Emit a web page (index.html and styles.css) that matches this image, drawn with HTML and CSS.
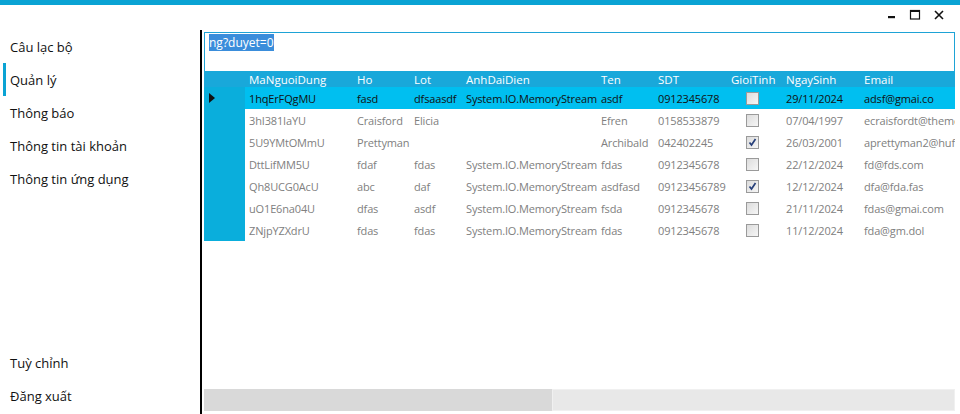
FILE: index.html
```html
<!DOCTYPE html>
<html lang="vi">
<head>
<meta charset="utf-8">
<title>Quản lý</title>
<link rel="stylesheet" href="styles.css">
</head>
<body>
<div class="app">
  <div class="topbar"></div>
  <div class="titlebar">
    <div class="winctl">
      <svg class="ctl" width="24" height="20" viewBox="0 0 24 20"><rect x="9" y="16" width="7" height="2.2" fill="#111"/></svg>
      <svg class="ctl" width="24" height="20" viewBox="0 0 24 20"><rect x="7.5" y="10.5" width="9" height="8.5" fill="none" stroke="#111" stroke-width="1.2"/><rect x="7" y="10" width="10" height="2" fill="#111"/></svg>
      <svg class="ctl" width="24" height="20" viewBox="0 0 24 20"><path d="M8 11 L16 19 M16 11 L8 19" stroke="#111" stroke-width="1.6"/></svg>
    </div>
  </div>
  <div class="main">
    <nav class="sidebar">
      <div class="nav-item">Câu lạc bộ</div>
      <div class="nav-item active">Quản lý</div>
      <div class="nav-item">Thông báo</div>
      <div class="nav-item">Thông tin tài khoản</div>
      <div class="nav-item">Thông tin ứng dụng</div>
      <div class="spacer"></div>
      <div class="nav-item">Tuỳ chỉnh</div>
      <div class="nav-item">Đăng xuất</div>
    </nav>
    <section class="content">
      <div class="query"><span class="sel">ng?duyet=0</span></div>
      <div class="grid">
        <div class="row head">
          <div class="rh"></div>
          <div class="c">MaNguoiDung</div><div class="c">Ho</div><div class="c">Lot</div><div class="c">AnhDaiDien</div><div class="c">Ten</div><div class="c">SDT</div><div class="c">GioiTinh</div><div class="c">NgaySinh</div><div class="c">Email</div>
        </div>
        <div class="row selected">
          <div class="rh"><svg width="8" height="10" viewBox="0 0 8 10"><path d="M1 0 L7 5 L1 10 Z" fill="#111"/></svg></div>
          <div class="c">1hqErFQgMU</div><div class="c">fasd</div><div class="c">dfsaasdf</div><div class="c">System.IO.MemoryStream</div><div class="c">asdf</div><div class="c">0912345678</div><div class="c cb"><span class="box"></span></div><div class="c">29/11/2024</div><div class="c">adsf@gmai.co</div>
        </div>
        <div class="row">
          <div class="rh"></div>
          <div class="c">3hI381IaYU</div><div class="c">Craisford</div><div class="c">Elicia</div><div class="c"></div><div class="c">Efren</div><div class="c">0158533879</div><div class="c cb"><span class="box"></span></div><div class="c">07/04/1997</div><div class="c">ecraisfordt@themeforest.net</div>
        </div>
        <div class="row">
          <div class="rh"></div>
          <div class="c">5U9YMtOMmU</div><div class="c">Prettyman</div><div class="c"></div><div class="c"></div><div class="c">Archibald</div><div class="c">042402245</div><div class="c cb"><span class="box checked"><svg width="11" height="11" viewBox="0 0 11 11"><path d="M2.5 5.5 L4.5 8 L8.5 2" fill="none" stroke="#27407a" stroke-width="1.7"/></svg></span></div><div class="c">26/03/2001</div><div class="c">aprettyman2@huffingtonpost.com</div>
        </div>
        <div class="row">
          <div class="rh"></div>
          <div class="c">DttLifMM5U</div><div class="c">fdaf</div><div class="c">fdas</div><div class="c">System.IO.MemoryStream</div><div class="c">fdas</div><div class="c">0912345678</div><div class="c cb"><span class="box"></span></div><div class="c">22/12/2024</div><div class="c">fd@fds.com</div>
        </div>
        <div class="row">
          <div class="rh"></div>
          <div class="c">Qh8UCG0AcU</div><div class="c">abc</div><div class="c">daf</div><div class="c">System.IO.MemoryStream</div><div class="c">asdfasd</div><div class="c">09123456789</div><div class="c cb"><span class="box checked"><svg width="11" height="11" viewBox="0 0 11 11"><path d="M2.5 5.5 L4.5 8 L8.5 2" fill="none" stroke="#27407a" stroke-width="1.7"/></svg></span></div><div class="c">12/12/2024</div><div class="c">dfa@fda.fas</div>
        </div>
        <div class="row">
          <div class="rh"></div>
          <div class="c">uO1E6na04U</div><div class="c">dfas</div><div class="c">asdf</div><div class="c">System.IO.MemoryStream</div><div class="c">fsda</div><div class="c">0912345678</div><div class="c cb"><span class="box"></span></div><div class="c">21/11/2024</div><div class="c">fdas@gmai.com</div>
        </div>
        <div class="row">
          <div class="rh"></div>
          <div class="c">ZNjpYZXdrU</div><div class="c">fdas</div><div class="c">fdas</div><div class="c">System.IO.MemoryStream</div><div class="c">fdas</div><div class="c">0912345678</div><div class="c cb"><span class="box"></span></div><div class="c">11/12/2024</div><div class="c">fda@gm.dol</div>
        </div>
      </div>
      <div class="hscroll"><div class="thumb"></div><div class="track"></div></div>
    </section>
  </div>
</div>
</body>
</html>
```
FILE: styles.css
```css
* { box-sizing: border-box; }
html, body { margin: 0; padding: 0; background: #fff; }
body { font-family: "Open Sans", "Noto Sans", sans-serif; color: #111; }
.app { width: 960px; height: 414px; display: flex; flex-direction: column; overflow: hidden; }
.topbar { height: 5px; background: #0aa3d4; flex: none; }
.titlebar { height: 25px; flex: none; display: flex; justify-content: flex-end; }
.winctl { display: flex; padding-right: 9px; }
.ctl { display: block; margin-top: -5px; }
.main { flex: 1; display: flex; min-height: 0; }
.sidebar { width: 202px; flex: none; border-right: 2px solid #000; display: flex; flex-direction: column; padding-bottom: 2px; }
.nav-item { height: 33px; line-height: 34px; padding-left: 10px; font-size: 13px; color: #111; position: relative; white-space: nowrap; }
.nav-item.active::before { content: ""; position: absolute; left: 3px; top: 0; width: 3px; height: 33px; background: #0aa3d4; }
.spacer { flex: 1; }
.content { flex: 1; display: flex; flex-direction: column; padding: 2px 5px 3px 2px; min-width: 0; }
.query { height: 39px; flex: none; border: 1px solid #1ea3d6; border-bottom: none; padding: 2px 0 0 4px; font-size: 12px; line-height: 15px; }
.sel { background: #3a8ddb; color: #fff; }
.grid { flex: 1; overflow: hidden; font-size: 11px; }
.row { display: grid; grid-template-columns: 41px 108px 57px 52px 135px 57px 73px 55px 78px 200px; height: 22px; align-items: center; white-space: nowrap; color: #808080; letter-spacing: -0.15px; }
.row .c { padding-left: 4px; overflow: hidden; }
.row .rh { height: 22px; background: #0aaedc; display: flex; align-items: center; padding-left: 4px; }
.row.head { height: 16px; background: #19a8da; color: #fff; font-size: 11.5px; letter-spacing: 0; }
.row.head .rh { height: 16px; background: #19a8da; }
.row.selected { background: #00bff0; color: #111; }
.cb { display: flex; justify-content: flex-start; padding-left: 19px !important; }
.box { width: 13px; height: 13px; border: 1px solid #9a9a9a; background: linear-gradient(135deg, #dcdcdc, #f6f6f6); display: block; position: relative; }
.box svg { position: absolute; left: 0; top: 0; }
.hscroll { height: 22px; flex: none; display: flex; }
.thumb { width: 348px; background: #d9d9d9; }
.track { flex: 1; background: #e8e8e8; border: 1px solid #f0f0f0; }
```
